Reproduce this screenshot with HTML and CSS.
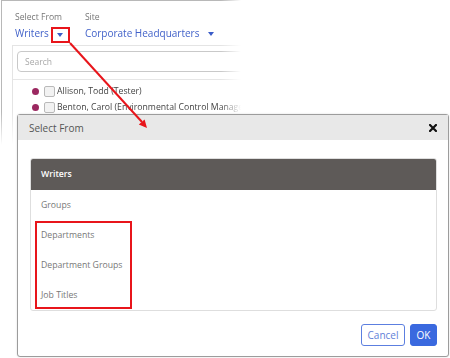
FILE: index.html
```html
<!DOCTYPE html>
<html>
<head>
  <title>Select From</title>
  <link rel="stylesheet" href="styles.css">
</head>
<body>
  <div class="stage">

    <div class="shot">
      <div class="shot-inner">
        <div class="filters">
          <div class="filter">
            <span class="label">Select From</span>
            <div class="value">
              <span>Writers</span>
              <span class="caret-box"><span class="caret"></span></span>
            </div>
          </div>
          <div class="filter">
            <span class="label">Site</span>
            <div class="value">
              <span>Corporate Headquarters</span>
              <span class="caret site-caret"></span>
            </div>
          </div>
        </div>

        <div class="panel">
          <div class="search-wrap">
            <input class="search" placeholder="Search">
          </div>
          <ul class="people">
            <li><span class="dot"></span><span class="check"></span>Allison, Todd (Tester)</li>
            <li><span class="dot"></span><span class="check"></span>Benton, Carol (Environmental Control Manager)</li>
          </ul>
          <div class="group-bar"></div>
        </div>
      </div>
    </div>

    <div class="dialog">
      <div class="dialog-head">
        <span>Select From</span>
        <svg class="close" width="8" height="8" viewBox="0 0 8 8">
          <path d="M1 1 L7 7 M7 1 L1 7" stroke="#111" stroke-width="2.2" stroke-linecap="square"/>
        </svg>
      </div>
      <div class="dialog-body">
        <div class="options">
          <div class="option selected">Writers</div>
          <div class="option">Groups</div>
          <div class="option">Departments</div>
          <div class="option">Department Groups</div>
          <div class="option">Job Titles</div>
          <div class="highlight"></div>
        </div>
        <div class="actions">
          <button class="btn btn-cancel">Cancel</button>
          <button class="btn btn-ok">OK</button>
        </div>
      </div>
    </div>

    <!-- callout arrow -->
    <svg class="arrow" width="450" height="358" viewBox="0 0 450 358">
      <line x1="70" y1="43" x2="142" y2="122" stroke="#e8151b" stroke-width="2"/>
      <polygon points="147,128 138.8,124.6 144.6,119.4" fill="#e8151b"/>
    </svg>

  </div>
</body>
</html>
```

FILE: styles.css
```css
body {
  margin: 0;
  background: #fff;
  font-family: "Open Sans", "Liberation Sans", sans-serif;
}
.stage {
  position: relative;
  width: 450px;
  height: 358px;
  overflow: hidden;
}

/* background screenshot, faded out to the right and bottom */
.shot {
  width: 260px;
  height: 160px;
  margin-left: 1px;
  -webkit-mask-image: linear-gradient(to right, #000 220px, transparent 240px);
  mask-image: linear-gradient(to right, #000 220px, transparent 240px);
}
.shot-inner {
  height: 100%;
  border-top: 1px solid #b8b8b8;
  border-left: 1px solid #b8b8b8;
  overflow: hidden;
  -webkit-mask-image: linear-gradient(to bottom, #000 112px, transparent 145px);
  mask-image: linear-gradient(to bottom, #000 112px, transparent 145px);
}
.filters {
  display: flex;
  gap: 15px;
  padding: 10px 0 0 13px;
}
.filter {
  display: flex;
  flex-direction: column;
}
.label {
  font-size: 8.6px;
  line-height: 12px;
  color: #777;
}
.value {
  display: flex;
  align-items: flex-start;
  margin-top: 2px;
  font-size: 10px;
  line-height: 16px;
  color: #4262c9;
  white-space: nowrap;
}
.caret-box {
  display: flex;
  align-items: center;
  justify-content: center;
  width: 19px;
  height: 16px;
  margin: 2px 0 0 2px;
  border: 2px solid #e8151b;
  box-sizing: border-box;
}
.caret {
  width: 0;
  height: 0;
  border-left: 3.5px solid transparent;
  border-right: 3.5px solid transparent;
  border-top: 4px solid #3a5cc8;
}
.site-caret {
  margin: 7px 0 0 9px;
}

.panel {
  width: 300px;
  margin: 2px 0 0 10px;
  border: 1px solid #e4e4e4;
}
.search-wrap {
  padding: 5px 0 7px 4px;
  border-bottom: 1px solid #e6e6e6;
}
.search {
  display: block;
  width: 300px;
  height: 21px;
  box-sizing: border-box;
  padding: 0 7px;
  border: 1px solid #c9c9c9;
  border-radius: 4px;
  font-family: inherit;
  font-size: 8.5px;
  outline: none;
}
.search::placeholder {
  color: #a8a8a8;
}
.people {
  list-style: none;
  margin: 0;
  padding: 3px 0 0 19px;
}
.people li {
  display: flex;
  align-items: center;
  height: 16px;
  font-size: 8.7px;
  color: #444;
  white-space: nowrap;
}
.dot {
  width: 7px;
  height: 7px;
  border-radius: 50%;
  background: #9b2860;
  margin-right: 5px;
}
.check {
  width: 9px;
  height: 9px;
  border: 1px solid #b9b9b9;
  border-radius: 2px;
  background: #f2f2f2;
  margin-right: 2px;
}
.group-bar {
  height: 24px;
  margin: 3px 0 0 4px;
  border: 1px solid #d4d4d4;
  border-radius: 3px;
  background: #eeeeee;
}

/* modal */
.dialog {
  position: absolute;
  left: 17px;
  top: 114px;
  width: 432px;
  height: 243px;
  box-sizing: border-box;
  border: 1px solid #9c9c9c;
  border-radius: 3px;
  background: #fff;
  box-shadow: 0 0 2px rgba(0, 0, 0, 0.15);
}
.dialog-head {
  display: flex;
  align-items: center;
  justify-content: space-between;
  height: 25px;
  padding: 0 11px;
  background: #e8e8e8;
  font-size: 10px;
  color: #555;
}
.close {
  display: block;
}
.dialog-body {
  padding: 18px 11px 10px 12px;
}
.options {
  position: relative;
  border: 1px solid #dedede;
  border-radius: 3px;
}
.option {
  height: 30px;
  line-height: 30px;
  padding-left: 10px;
  font-size: 8.7px;
  color: #777;
}
.option.selected {
  height: 31px;
  line-height: 31px;
  background: #5e5a58;
  color: #fff;
  font-weight: 600;
  border-radius: 2px 2px 0 0;
}
.highlight {
  position: absolute;
  left: 4px;
  top: 62px;
  width: 97px;
  height: 88px;
  box-sizing: border-box;
  border: 2px solid #e8151b;
}
.actions {
  display: flex;
  justify-content: flex-end;
  gap: 5px;
  margin-top: 13px;
}
.btn {
  height: 22px;
  padding: 0;
  border-radius: 3px;
  font-family: inherit;
  font-size: 10px;
  cursor: pointer;
}
.btn-cancel {
  width: 44px;
  border: 1px solid #5c7fe0;
  background: #fff;
  color: #5f7fd8;
}
.btn-ok {
  width: 27px;
  border: 1px solid #3a69df;
  background: #3a69df;
  color: #fff;
}

.arrow {
  position: absolute;
  left: 0;
  top: 0;
  pointer-events: none;
}
```
